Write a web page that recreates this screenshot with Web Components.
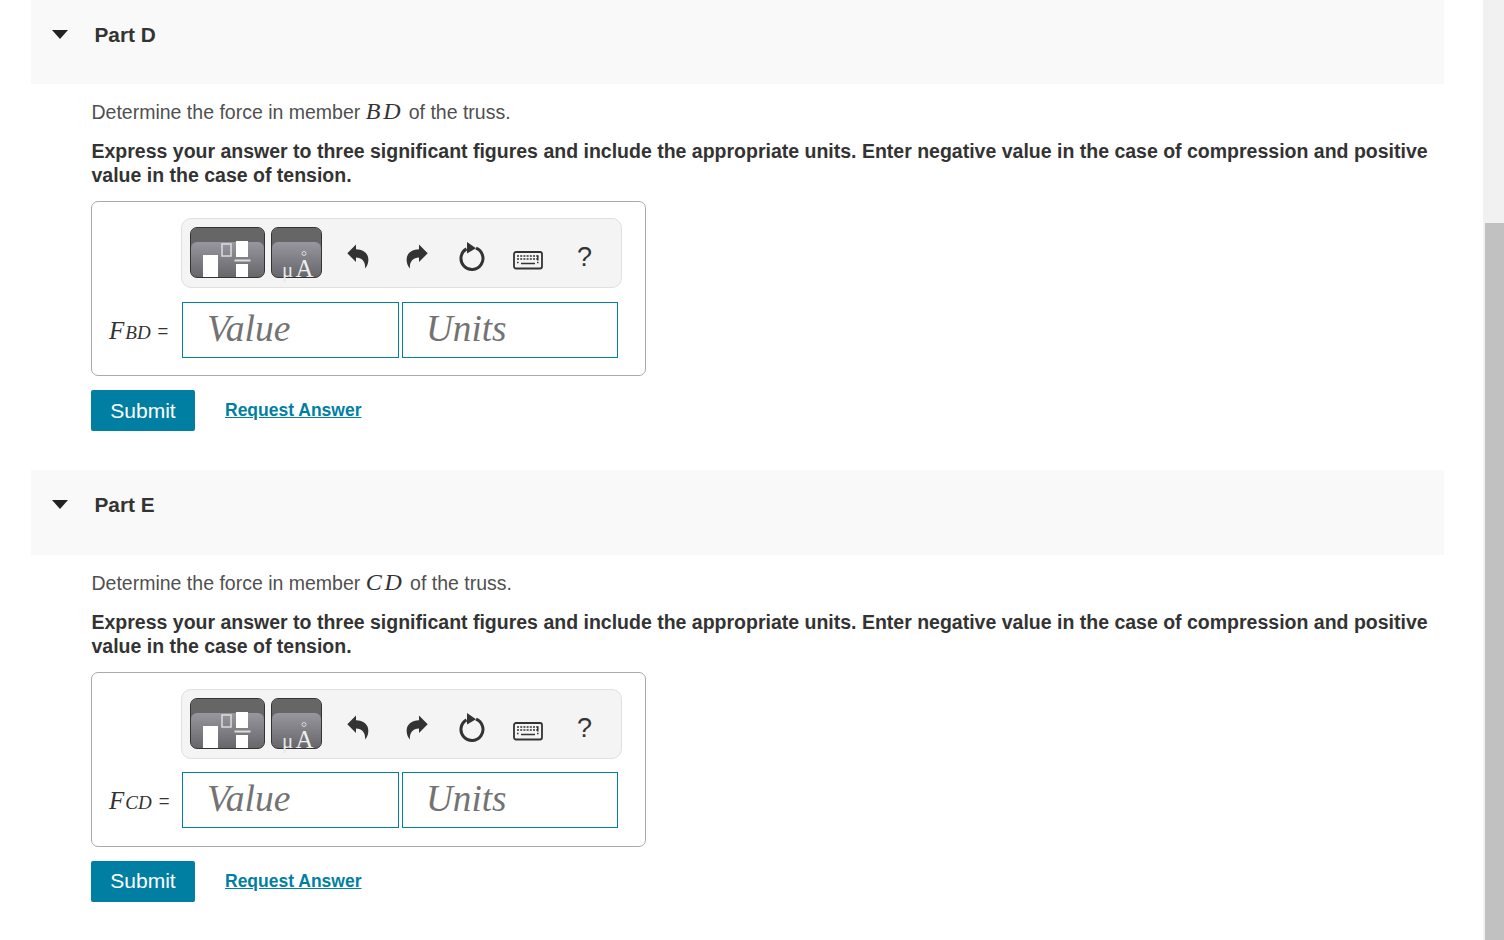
<!DOCTYPE html>
<html lang="en">
<head>
<meta charset="utf-8">
<title>Parts</title>
<style>
    html, body{
        margin: 0;
        height: 940px;
        overflow: hidden;
        background: #fff;
        font-family: "Liberation Sans", Arial, sans-serif;
    }
    body{
        display: flex;
    }
    main{
        flex: 1;
        padding: 0 39px 0 31px;
        margin-top: -0.5px;
    }
    i.m{
        font-family: "Liberation Serif", serif;
        font-size: 24px;
        letter-spacing: 2.8px;
        color: #333;
    }
</style>
</head>
<body>
<main>
    <part-section title="Part D">
        <span slot="question">Determine the force in member <i class="m">BD</i> of the truss.</span>
        <span slot="hint">Express your answer to three significant figures and include the appropriate units. Enter negative value in the case of compression and positive value in the case of tension.</span>
        <answer-box sub="BD"></answer-box>
    </part-section>
    <part-section title="Part E">
        <span slot="question">Determine the force in member <i class="m">CD</i> of the truss.</span>
        <span slot="hint">Express your answer to three significant figures and include the appropriate units. Enter negative value in the case of compression and positive value in the case of tension.</span>
        <answer-box sub="CD"></answer-box>
    </part-section>
</main>
<fake-scrollbar></fake-scrollbar>

<script>
class PartSection extends HTMLElement{
    constructor(){
        super();
        this.attachShadow({ mode: 'open' });
    }

    connectedCallback(){
        this.shadowRoot.innerHTML = `
            <style>
                :host{
                    display: block;
                    height: 470.5px;
                }
                header{
                    display: flex;
                    align-items: flex-start;
                    height: 84.5px;
                    background: #f9f9f9;
                }
                .arrow{
                    width: 16px;
                    height: 9px;
                    margin: 30px 0 0 21px;
                }
                h2{
                    margin: 23px 0 0 26.5px;
                    font-size: 20.8px;
                    line-height: 24px;
                    font-weight: 700;
                    color: #333;
                }
                .body{
                    padding: 15px 0 0 60px;
                }
                .question{
                    font-size: 19.5px;
                    line-height: 24px;
                    height: 24px;
                    color: #505050;
                    margin: 0 0 16px 0.5px;
                }
                .hint{
                    font-size: 19.5px;
                    line-height: 24px;
                    font-weight: 700;
                    color: #333;
                    margin: 0 0 14px 0.5px;
                    width: 1350px;
                }
                .actions{
                    display: flex;
                    align-items: center;
                    gap: 30px;
                    margin-top: 14px;
                }
                button{
                    width: 104px;
                    height: 41px;
                    padding: 0;
                    border: 0;
                    border-radius: 2px;
                    background: #007fa3;
                    color: #fff;
                    font: 21px "Liberation Sans", Arial, sans-serif;
                }
                a{
                    font-size: 17.5px;
                    font-weight: 700;
                    color: #007fa3;
                    text-decoration: underline;
                }
            </style>
            <header>
                <svg class="arrow" viewBox="0 0 16 9"><path d="M0 0H16L8 9Z" fill="#222"/></svg>
                <h2>${this.getAttribute("title")}</h2>
            </header>
            <div class="body">
                <div class="question"><slot name="question"></slot></div>
                <div class="hint"><slot name="hint"></slot></div>
                <slot></slot>
                <div class="actions">
                    <button>Submit</button>
                    <a href="#">Request Answer</a>
                </div>
            </div>
        `;
    }
}

class AnswerBox extends HTMLElement{
    constructor(){
        super();
        this.attachShadow({ mode: 'open' });
    }

    connectedCallback(){
        this.shadowRoot.innerHTML = `
            <style>
                :host{
                    display: block;
                    box-sizing: border-box;
                    width: 555px;
                    height: 175px;
                    padding: 16px 0 0 89px;
                    border: 1px solid #aaa;
                    border-radius: 7px;
                }
                .row{
                    display: flex;
                    margin: 13.6px 0 0 1px;
                }
                .label{
                    width: 73px;
                    margin-left: -73px;
                    padding-top: 2px;
                    display: flex;
                    align-items: center;
                    box-sizing: border-box;
                    color: #333;
                    font-family: "Liberation Serif", serif;
                    font-style: italic;
                    white-space: nowrap;
                }
                .label .f{
                    font-size: 25px;
                }
                .label .s{
                    font-size: 19px;
                    position: relative;
                    top: 2px;
                    margin-left: 1px;
                }
                .label .eq{
                    font: 18.5px "Liberation Sans", Arial, sans-serif;
                    margin-left: 7px;
                }
            </style>
            <math-toolbar></math-toolbar>
            <div class="row">
                <div class="label"><span class="f">F</span><span class="s">${this.getAttribute("sub")}</span><span class="eq">=</span></div>
                <answer-field style="width:217px">Value</answer-field>
                <answer-field style="width:216px;margin-left:3px;padding-left:23px;font-size:37.2px">Units</answer-field>
            </div>
        `;
    }
}

class AnswerField extends HTMLElement{
    constructor(){
        super();
        this.attachShadow({ mode: 'open' });
    }

    connectedCallback(){
        this.shadowRoot.innerHTML = `
            <style>
                :host{
                    display: flex;
                    align-items: center;
                    box-sizing: border-box;
                    height: 56px;
                    padding: 0 0 2.5px 24px;
                    border: 1px solid #007fa3;
                    font: italic 37.6px "Liberation Serif", serif;
                    color: #737373;
                }
            </style>
            <slot></slot>
        `;
    }
}

class MathToolbar extends HTMLElement{
    constructor(){
        super();
        this.attachShadow({ mode: 'open' });
    }

    connectedCallback(){
        this.shadowRoot.innerHTML = `
            <style>
                :host{
                    display: block;
                    box-sizing: border-box;
                    width: 441px;
                    height: 70px;
                    background: #f4f4f4;
                    border: 1px solid #e0e0e0;
                    border-radius: 10px;
                }
                .bar{
                    display: flex;
                    align-items: flex-start;
                    padding: 8px 0 0 8px;
                }
                .btn{
                    box-sizing: border-box;
                    height: 51px;
                    border: 1px solid #333;
                    border-radius: 7px;
                    background: linear-gradient(#98979f 14px, #66666b);
                    box-shadow: inset 0 14px 0 #666;
                }
                .tpl{ width: 75px; }
                .unit{ width: 51px; margin-left: 6px; overflow: visible; }
                svg{
                    display: block;
                    flex: none;
                }
                .undo{ margin: 16px 0 0 24px; }
                .redo{ margin: 16px 0 0 35px; }
                .reset{ margin: 14px 0 0 28px; }
                .keys{ margin: 24px 0 0 28px; }
                .help{
                    margin: 10px 0 0 34px;
                    font: 27px/40px "Liberation Sans", Arial, sans-serif;
                    color: #333;
                }
            </style>
            <div class="bar">
                <svg class="btn tpl" viewBox="0 0 73 49" width="75" height="51">
                    <path d="M12 27H27V49H12Z M45 13H57V29H45Z M45 36H57V49H45Z" fill="#fff"/>
                    <rect x="31" y="16" width="9" height="12" fill="none" stroke="#ddd" stroke-width="1.5"/>
                    <rect x="43.5" y="31.5" width="16" height="2" fill="#ddd"/>
                </svg>
                <svg class="btn unit" viewBox="0 0 49 49" width="51" height="51">
                    <text x="10" y="48.5" font-family="Liberation Serif, serif" font-size="21" fill="#e8e8e8">μ</text>
                    <text x="23.5" y="48.5" font-family="Liberation Serif, serif" font-size="25" fill="#eee">A</text>
                    <circle cx="32" cy="25.5" r="2" fill="none" stroke="#ddd" stroke-width="1"/>
                </svg>
                <svg class="undo" viewBox="0 0 24 26" width="24" height="26"><path d="M1.3 10.3 10 1.5V6.2C17 6.5 23 10 22.3 18 22 21 20.8 23.5 19 25.5 19.8 19 16 14.5 10 14.5V19Z" fill="#333"/></svg>
                <svg class="redo" viewBox="0 0 24 26" width="24" height="26"><path d="M22.7 10.3 14 1.5V6.2C7 6.5 1 10 1.7 18 2 21 3.2 23.5 5 25.5 4.2 19 8 14.5 14 14.5V19Z" fill="#333"/></svg>
                <svg class="reset" viewBox="0 0 28 32" width="28" height="32"><path d="M9.5 7.9A11 11 0 1 0 19 7.2" fill="none" stroke="#333" stroke-width="3"/><path d="M10 1 19 7.3 10 12.5Z" fill="#333"/></svg>
                <svg class="keys" viewBox="0 0 30 19" width="30" height="19">
                    <rect x="1" y="1" width="28" height="16.5" rx="2" fill="none" stroke="#333" stroke-width="1.8"/>
                    <path d="M4 5H26M4 8H25" fill="none" stroke="#333" stroke-width="1.5" stroke-dasharray="2 1.2"/>
                    <path d="M24.8 4.5V9.5M4 11.5H5.5M24 11.5H25.5M8 12.5H22" fill="none" stroke="#333" stroke-width="1.5"/>
                </svg>
                <div class="help">?</div>
            </div>
        `;
    }
}

class FakeScrollbar extends HTMLElement{
    constructor(){
        super();
        this.attachShadow({ mode: 'open' });
    }

    connectedCallback(){
        this.shadowRoot.innerHTML = `
            <style>
                :host{
                    display: block;
                    box-sizing: border-box;
                    flex: none;
                    width: 21px;
                    height: 940px;
                    padding: 223px 0 0 2px;
                    background: #f1f1f1;
                }
                div{
                    height: 717px;
                    background: #c1c1c1;
                }
            </style>
            <div></div>
        `;
    }
}

customElements.define('part-section', PartSection);
customElements.define('answer-box', AnswerBox);
customElements.define('answer-field', AnswerField);
customElements.define('math-toolbar', MathToolbar);
customElements.define('fake-scrollbar', FakeScrollbar);
</script>
</body>
</html>
